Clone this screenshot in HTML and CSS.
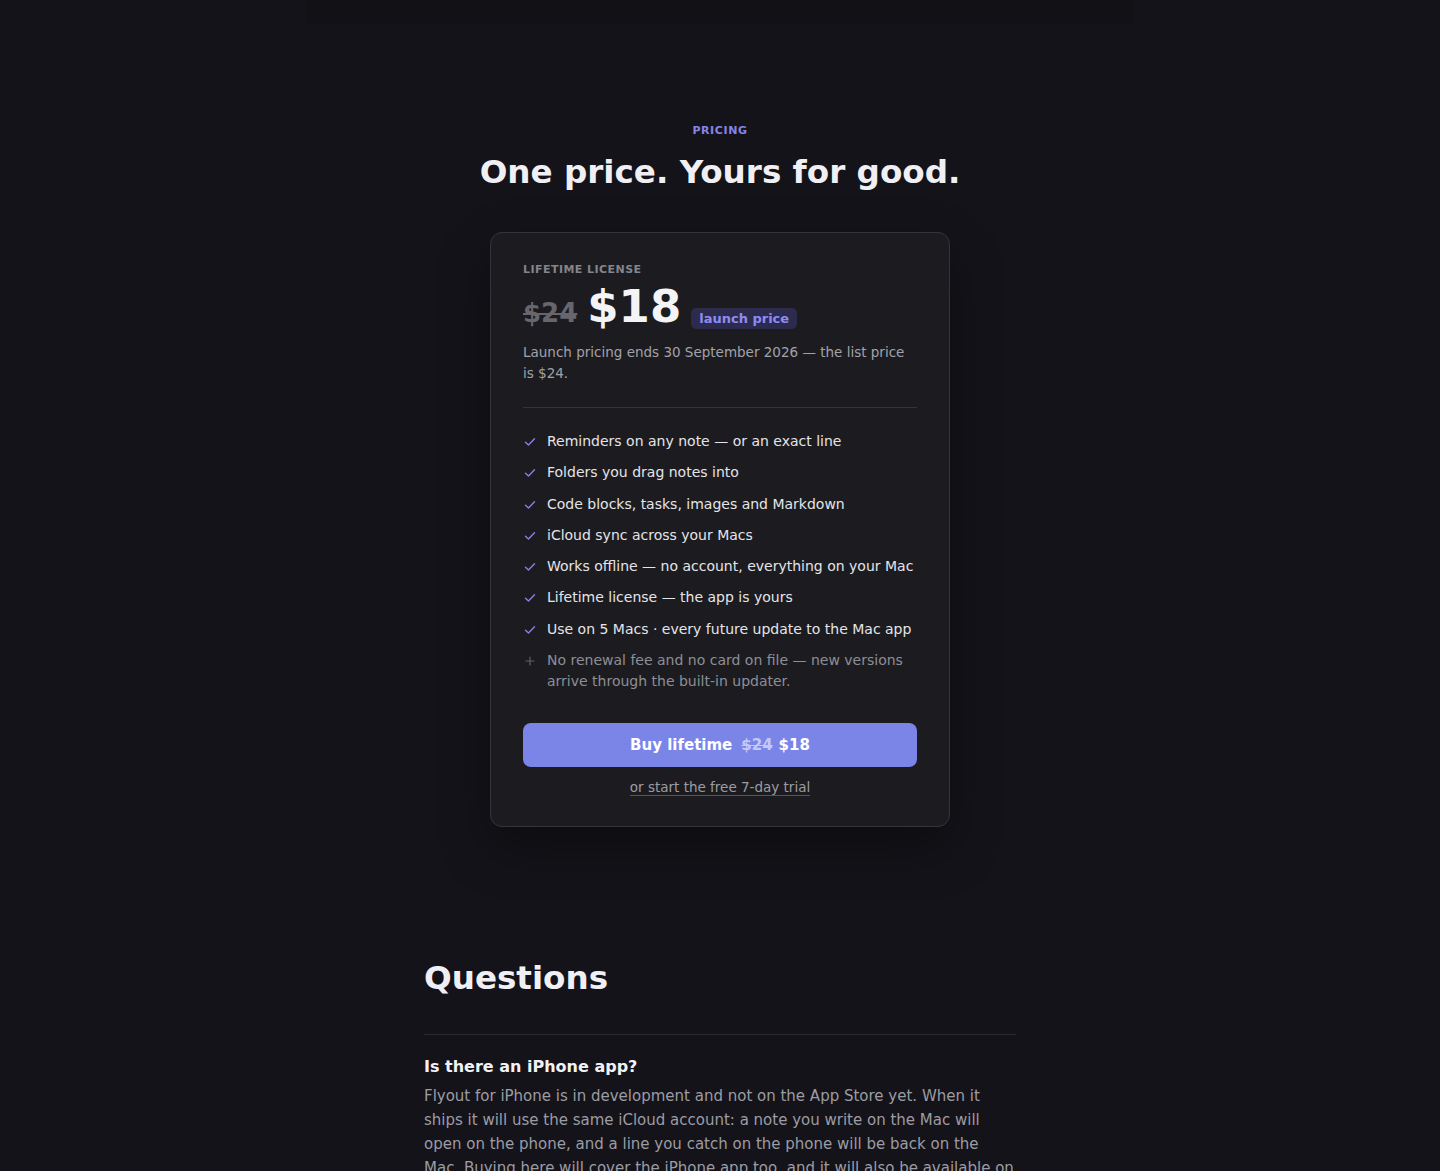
FILE: index.html
```html
<!DOCTYPE html>
<html lang="en">
<head>
<meta charset="utf-8">
<title>Pricing</title>
<link rel="stylesheet" href="styles.css">
</head>
<body>
<div class="topbar"></div>
<main class="page">
  <section class="pricing">
    <p class="eyebrow">PRICING</p>
    <h1 class="title">One price. Yours for good.</h1>
    <div class="card">
      <p class="label">LIFETIME LICENSE</p>
      <div class="price-row">
        <span class="old-price">$24</span>
        <span class="price">$18</span>
        <span class="badge">launch price</span>
      </div>
      <p class="desc">Launch pricing ends 30 September 2026 — the list price is $24.</p>
      <hr class="divider">
      <ul class="features">
        <li class="feature"><svg class="icon" viewBox="0 0 14 14" width="14" height="14"><path d="M2.5 7.2l3 2.8 6-6.2" fill="none" stroke="#8a7fe6" stroke-width="1.4" stroke-linecap="round" stroke-linejoin="round"/></svg><span>Reminders on any note — or an exact line</span></li>
        <li class="feature"><svg class="icon" viewBox="0 0 14 14" width="14" height="14"><path d="M2.5 7.2l3 2.8 6-6.2" fill="none" stroke="#8a7fe6" stroke-width="1.4" stroke-linecap="round" stroke-linejoin="round"/></svg><span>Folders you drag notes into</span></li>
        <li class="feature"><svg class="icon" viewBox="0 0 14 14" width="14" height="14"><path d="M2.5 7.2l3 2.8 6-6.2" fill="none" stroke="#8a7fe6" stroke-width="1.4" stroke-linecap="round" stroke-linejoin="round"/></svg><span>Code blocks, tasks, images and Markdown</span></li>
        <li class="feature"><svg class="icon" viewBox="0 0 14 14" width="14" height="14"><path d="M2.5 7.2l3 2.8 6-6.2" fill="none" stroke="#8a7fe6" stroke-width="1.4" stroke-linecap="round" stroke-linejoin="round"/></svg><span>iCloud sync across your Macs</span></li>
        <li class="feature"><svg class="icon" viewBox="0 0 14 14" width="14" height="14"><path d="M2.5 7.2l3 2.8 6-6.2" fill="none" stroke="#8a7fe6" stroke-width="1.4" stroke-linecap="round" stroke-linejoin="round"/></svg><span>Works offline — no account, everything on your Mac</span></li>
        <li class="feature"><svg class="icon" viewBox="0 0 14 14" width="14" height="14"><path d="M2.5 7.2l3 2.8 6-6.2" fill="none" stroke="#8a7fe6" stroke-width="1.4" stroke-linecap="round" stroke-linejoin="round"/></svg><span>Lifetime license — the app is yours</span></li>
        <li class="feature"><svg class="icon" viewBox="0 0 14 14" width="14" height="14"><path d="M2.5 7.2l3 2.8 6-6.2" fill="none" stroke="#8a7fe6" stroke-width="1.4" stroke-linecap="round" stroke-linejoin="round"/></svg><span>Use on 5 Macs · every future update to the Mac app</span></li>
        <li class="feature note"><svg class="icon" viewBox="0 0 14 14" width="14" height="14"><path d="M7 3v8M3 7h8" fill="none" stroke="#5e5e66" stroke-width="1.2" stroke-linecap="round"/></svg><span>No renewal fee and no card on file — new versions arrive through the built-in updater.</span></li>
      </ul>
      <a class="buy" href="#"><span>Buy lifetime</span><s class="buy-old">$24</s><span>$18</span></a>
      <p class="trial-wrap"><a class="trial" href="#">or start the free 7-day trial</a></p>
    </div>
  </section>
  <section class="faq">
    <h2 class="faq-title">Questions</h2>
    <div class="faq-item">
      <h3 class="q">Is there an iPhone app?</h3>
      <p class="a">Flyout for iPhone is in development and not on the App Store yet. When it ships it will use the same iCloud account: a note you write on the Mac will open on the phone, and a line you catch on the phone will be back on the Mac. Buying here will cover the iPhone app too, and it will also be available on the App Store.</p>
    </div>
  </section>
</main>
</body>
</html>
```
FILE: styles.css
```css
* { box-sizing: border-box; }
html, body { margin: 0; padding: 0; }
body {
  background: #141319;
  color: #ececf0;
  font-family: "DejaVu Sans", Verdana, sans-serif;
}
.topbar {
  height: 24px;
  width: 830px;
  margin: 0 auto;
  background: #121116;
}
.page {
  display: flex;
  flex-direction: column;
  align-items: center;
}
.pricing {
  display: flex;
  flex-direction: column;
  align-items: center;
  padding-top: 100px;
}
.eyebrow {
  margin: 0;
  font-size: 11px;
  font-weight: 700;
  letter-spacing: 0.6px;
  color: #8784e6;
  line-height: 14px;
}
.title {
  margin: 12px 0 0;
  font-size: 32.6px;
  line-height: 44px;
  font-weight: 700;
  color: #f0f0f4;
}
.card {
  margin-top: 38px;
  width: 460px;
  background: #1c1c20;
  border: 1px solid #34343a;
  border-radius: 12px;
  padding: 30px 32px 30px;
  box-shadow: 0 20px 50px rgba(0,0,0,0.35);
}
.label {
  margin: 0;
  font-size: 11px;
  font-weight: 700;
  letter-spacing: 0.45px;
  color: #84848c;
  line-height: 14px;
}
.price-row {
  display: flex;
  align-items: baseline;
  gap: 10px;
  margin-top: 3px;
  height: 54px;
}
.old-price {
  font-size: 26px;
  font-weight: 700;
  color: #66666c;
  text-decoration: line-through;
  text-decoration-thickness: 2px;
}
.price {
  font-size: 45px;
  font-weight: 700;
  color: #f4f4f6;
  line-height: 54px;
}
.badge {
  font-size: 13px;
  font-weight: 700;
  color: #8e8cf2;
  background: #2c2b4e;
  border-radius: 5px;
  padding: 3px 8px;
  position: relative;
  top: 1px;
}
.desc {
  margin: 8px 0 0;
  font-size: 13.5px;
  line-height: 21px;
  color: #a2a2aa;
}
.divider {
  border: 0;
  border-top: 1px solid #333338;
  margin: 23px 0 0;
}
.features {
  list-style: none;
  margin: 23px 0 0;
  padding: 0;
  display: flex;
  flex-direction: column;
  gap: 10.3px;
}
.feature {
  display: flex;
  gap: 10px;
  font-size: 14px;
  line-height: 21px;
  color: #e4e4ea;
}
.feature .icon {
  flex: none;
  margin-top: 4px;
}
.feature.note { color: #8e8e96; }
.buy {
  display: flex;
  align-items: center;
  justify-content: center;
  margin-top: 31px;
  height: 44px;
  background: #7b85e8;
  border-radius: 8px;
  color: #ffffff;
  font-size: 15px;
  font-weight: 700;
  text-decoration: none;
}
.buy-old {
  color: #c3c8f6;
  font-weight: 700;
  margin: 0 6px 0 9px;
  text-decoration-thickness: 1px;
}
.trial-wrap {
  margin: 11px 0 0;
  text-align: center;
  font-size: 13.5px;
  line-height: 18px;
}
.trial {
  color: #9c9ca4;
  text-decoration: none;
  border-bottom: 1px solid #55555c;
}
.faq {
  width: 592px;
  margin-top: 129px;
}
.faq-title {
  margin: 0;
  font-size: 32.6px;
  line-height: 44px;
  font-weight: 700;
  color: #f0f0f4;
}
.faq-item {
  margin-top: 34px;
  border-top: 1px solid #2a2a30;
  padding-top: 21px;
}
.q {
  margin: 0;
  font-size: 16px;
  line-height: 22px;
  font-weight: 700;
  color: #f2f2f6;
}
.a {
  margin: 6px 0 0;
  font-size: 15px;
  line-height: 24px;
  color: #9c9ca4;
}
```
